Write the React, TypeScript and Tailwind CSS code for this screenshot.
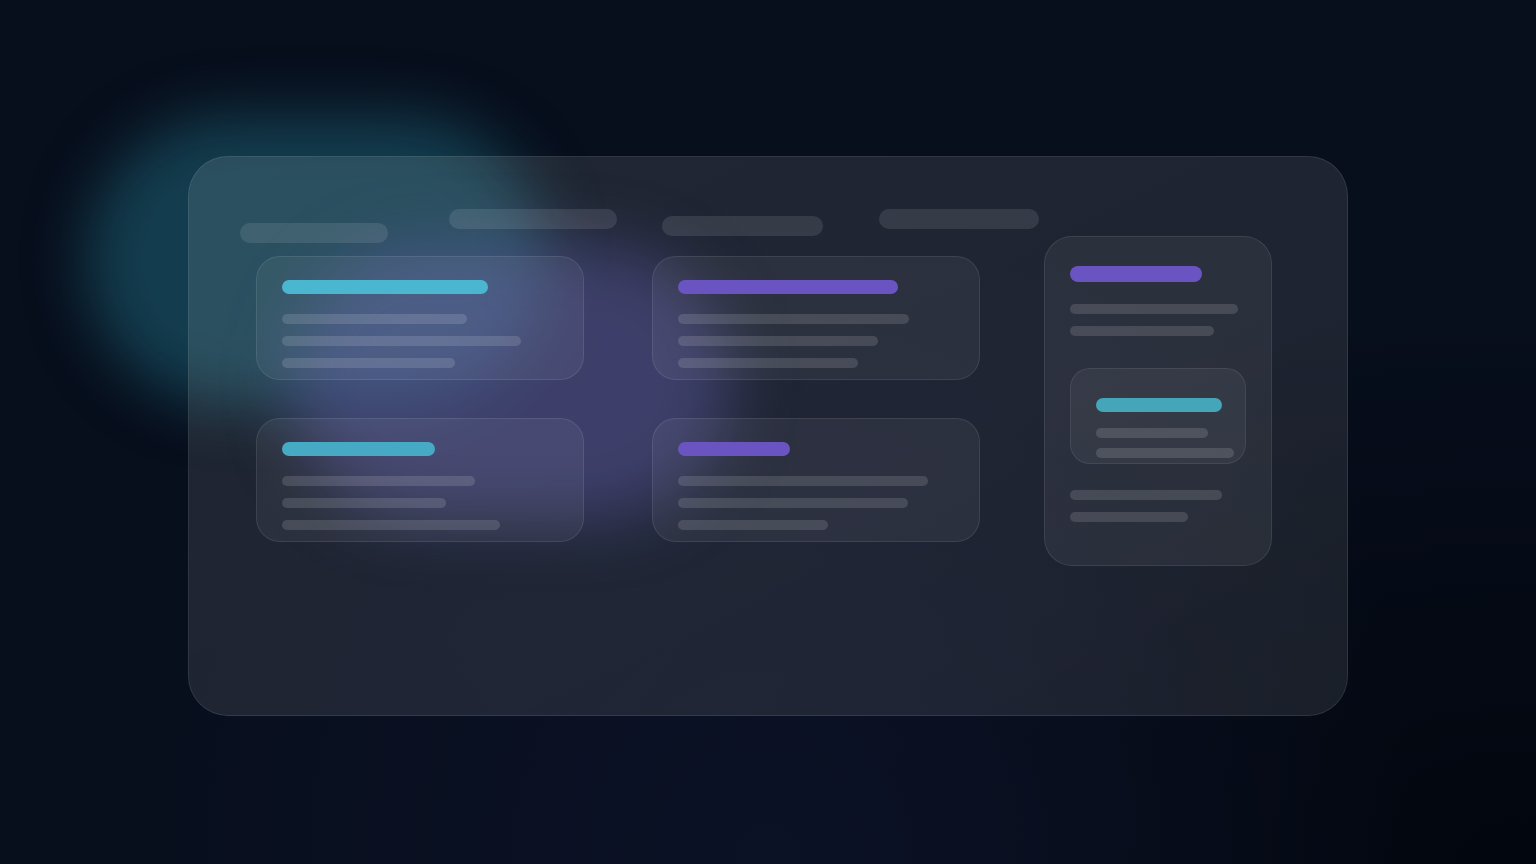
import React from 'react';

const Line = ({ w }: { w: string }) => <div className={`h-[10px] rounded-full bg-white/[0.13] ${w}`} />;

const Card = ({ titleW, color, lines }: { titleW: string; color: string; lines: string[] }) => (
  <div className="h-[124px] w-[328px] rounded-[24px] border border-white/[0.09] bg-white/[0.055] px-[25px] pt-[23px]">
    <div className={`h-[14px] rounded-full ${titleW} ${color}`} />
    <div className="mt-[20px] flex flex-col gap-[12px]">
      {lines.map((w, i) => (
        <Line key={i} w={w} />
      ))}
    </div>
  </div>
);

const App: React.FC = () => {
  return (
    <div className="relative h-[864px] w-full overflow-hidden bg-[#070e1c] bg-[radial-gradient(ellipse_at_50%_100%,#0c1226_0%,transparent_60%),radial-gradient(ellipse_at_100%_100%,#02060e_0%,transparent_45%)]">
      {/* glow blobs behind the glass */}
      <div className="absolute left-[85px] top-[115px] h-[290px] w-[460px] rounded-full bg-[#1d6478]/55 blur-[30px]" />
      <div className="absolute left-[290px] top-[245px] h-[275px] w-[440px] rounded-full bg-[#4a4896]/50 blur-[32px]" />

      <div className="relative pl-[188px] pt-[156px]">
        <div className="h-[560px] w-[1160px] rounded-[40px] border border-white/[0.09] bg-gradient-to-br from-white/[0.105] to-white/[0.085] pt-[52px]">
          {/* top pills */}
          <div className="flex h-[27px] items-start pl-[51px]">
            <div className="mt-[14px] h-[20px] w-[148px] rounded-full bg-white/[0.1]" />
            <div className="ml-[61px] h-[20px] w-[168px] rounded-full bg-white/[0.1]" />
            <div className="ml-[45px] mt-[7px] h-[20px] w-[161px] rounded-full bg-white/[0.1]" />
            <div className="ml-[56px] h-[20px] w-[160px] rounded-full bg-white/[0.1]" />
          </div>

          <div className="flex items-start pl-[67px]">
            <div className="grid grid-cols-[328px_328px] gap-x-[68px] gap-y-[38px] pt-[20px]">
              <Card titleW="w-[206px]" color="bg-[#4bb6cf]" lines={['w-[185px]', 'w-[239px]', 'w-[173px]']} />
              <Card titleW="w-[220px]" color="bg-[#6a54c2]" lines={['w-[231px]', 'w-[200px]', 'w-[180px]']} />
              <Card titleW="w-[153px]" color="bg-[#46aac4]" lines={['w-[193px]', 'w-[164px]', 'w-[218px]']} />
              <Card titleW="w-[112px]" color="bg-[#6a54c2]" lines={['w-[250px]', 'w-[230px]', 'w-[150px]']} />
            </div>

            <div className="ml-[64px] h-[330px] w-[228px] rounded-[28px] border border-white/[0.09] bg-white/[0.06] px-[25px] pt-[29px]">
              <div className="h-[16px] w-[132px] rounded-full bg-[#6a54c2]" />
              <div className="mt-[22px] flex flex-col gap-[12px]">
                <Line w="w-[168px]" />
                <Line w="w-[144px]" />
              </div>
              <div className="mt-[32px] h-[96px] w-[176px] overflow-hidden rounded-[20px] border border-white/[0.08] bg-white/[0.05] px-[25px] pt-[29px]">
                <div className="h-[14px] w-[126px] rounded-full bg-[#44a6b8]" />
                <div className="mt-[16px] flex flex-col gap-[10px]">
                  <Line w="w-[112px]" />
                  <Line w="w-[138px]" />
                </div>
              </div>
              <div className="mt-[26px] flex flex-col gap-[12px]">
                <Line w="w-[152px]" />
                <Line w="w-[118px]" />
              </div>
            </div>
          </div>
        </div>
      </div>
    </div>
  );
};

export default App;
